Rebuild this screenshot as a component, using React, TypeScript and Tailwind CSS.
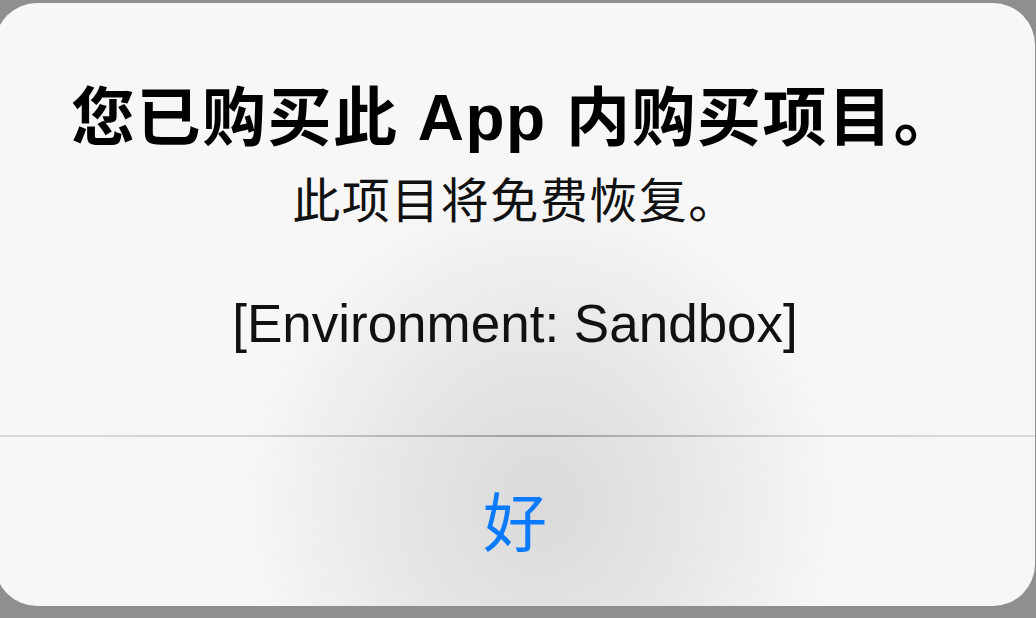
export default function App() {
  return (
    <div className="h-[618px] w-[1036px] overflow-hidden bg-[#8f8f8f] font-['Liberation_Sans','Noto_Sans_CJK_SC',sans-serif]">
      <div className="-ml-[5px] mt-[3px] flex h-[603px] w-[1040px] flex-col overflow-hidden rounded-[42px] bg-[#f7f7f7] bg-[radial-gradient(ellipse_300px_320px_at_545px_500px,#dadada_0%,#e3e3e3_38%,#f7f7f7_100%)]">
        <div className="flex h-[432px] flex-col items-center pt-[75px] text-center">
          <h1 className="text-[64px] font-bold leading-[80px] tracking-[1.5px] text-black">
            您已购买此 App 内购买项目。
          </h1>
          <p className="mt-[16px] text-[48px] leading-[56px] tracking-[1.5px] text-[#111]">
            此项目将免费恢复。
          </p>
          <p className="mt-[64px] text-[53px] leading-[60px] text-[#111]">
            [Environment: Sandbox]
          </p>
        </div>
        <div className="h-[2px] bg-[linear-gradient(to_right,#dcdcdc,#d0d0d0_25%,#9f9f9f_52%,#d0d0d0_78%,#dcdcdc)]" />
        <button className="flex flex-1 items-center justify-center pt-[4px] text-[64px] leading-[72px] text-[#0a7bff]">
          好
        </button>
      </div>
    </div>
  );
}
